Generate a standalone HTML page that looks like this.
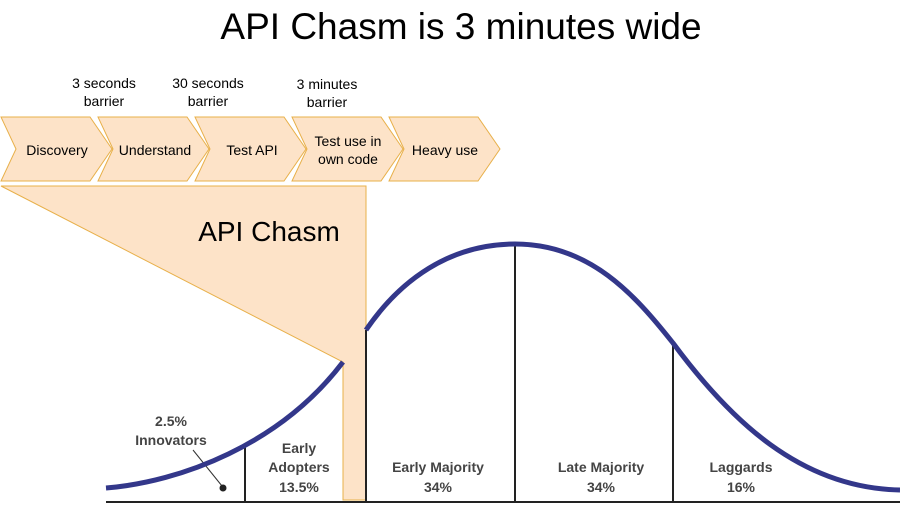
<!DOCTYPE html>
<html><head><meta charset="utf-8"><style>
html,body{margin:0;padding:0;background:#fff;width:900px;height:520px;overflow:hidden}
svg{display:block}
text{font-family:"Liberation Sans",sans-serif}
</style></head><body>
<svg width="900" height="520" viewBox="0 0 900 520">
<text x="461" y="39" font-size="37" text-anchor="middle" fill="#000">API Chasm is 3 minutes wide</text>
<g font-size="14" fill="#000" text-anchor="middle">
<text x="104" y="88">3 seconds</text><text x="104" y="106">barrier</text>
<text x="208" y="88">30 seconds</text><text x="208" y="106">barrier</text>
<text x="327" y="89">3 minutes</text><text x="327" y="107">barrier</text>
</g>
<g fill="#fde3c8" stroke="#e8b04a" stroke-width="1">
<polygon points="1,117 90,117 112,149 90,181 1,181 16,149"/>
<polygon points="98,117 187,117 209,149 187,181 98,181 113,149"/>
<polygon points="195,117 284,117 306,149 284,181 195,181 210,149"/>
<polygon points="292,117 381,117 403,149 381,181 292,181 307,149"/>
<polygon points="389,117 478,117 500,149 478,181 389,181 404,149"/>
<polygon points="1,186 366,186 366,500 343,500 343,362 1,186"/>
</g>
<g font-size="14" fill="#000" text-anchor="middle">
<text x="57" y="155">Discovery</text>
<text x="155" y="155">Understand</text>
<text x="252" y="155">Test API</text>
<text x="348" y="146">Test use in</text><text x="348" y="164">own code</text>
<text x="445" y="155">Heavy use</text>
</g>
<text x="269" y="241" font-size="28" text-anchor="middle" fill="#000">API Chasm</text>
<g stroke="#222" stroke-width="2" fill="none">
<line x1="106" y1="502" x2="900" y2="502"/>
<line x1="245" y1="445" x2="245" y2="502"/>
<line x1="366" y1="330" x2="366" y2="502"/>
<line x1="515" y1="244" x2="515" y2="502"/>
<line x1="673" y1="343" x2="673" y2="502"/>
</g>
<line x1="193" y1="450" x2="222" y2="486" stroke="#333" stroke-width="1"/>
<circle cx="223" cy="488" r="3.5" fill="#222"/>
<path d="M106,488 C180,482 280,445 343,362" stroke="#33378a" stroke-width="5" fill="none"/>
<path d="M366,330 C400,280 450,244 515,244 C590,244 635,295 673,343 C730,420 800,488 900,490" stroke="#33378a" stroke-width="5" fill="none"/>
<g font-size="14" font-weight="bold" fill="#444" text-anchor="middle">
<text x="171" y="426">2.5%</text><text x="171" y="445">Innovators</text>
<text x="299" y="453">Early</text><text x="299" y="472">Adopters</text><text x="299" y="492">13.5%</text>
<text x="438" y="472">Early Majority</text><text x="438" y="492">34%</text>
<text x="601" y="472">Late Majority</text><text x="601" y="492">34%</text>
<text x="741" y="472">Laggards</text><text x="741" y="492">16%</text>
</g>
</svg>
</body></html>
